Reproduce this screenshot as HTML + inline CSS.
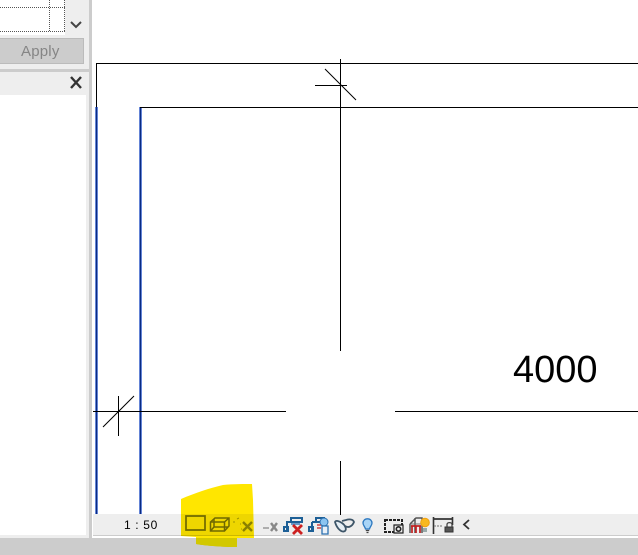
<!DOCTYPE html>
<html><head><meta charset="utf-8">
<style>
html,body{margin:0;padding:0;background:#fff}
#r{position:relative;width:638px;height:555px;overflow:hidden;background:#fff;font-family:"Liberation Sans",sans-serif}
#r div{position:absolute}
svg{position:absolute;left:0;top:0}
</style></head><body>
<div id="r">
<div style="left:0;top:0;width:89px;height:538px;background:#eee"></div>
<div style="left:89px;top:0;width:3px;height:538px;background:#ccc"></div>
<div style="left:0;top:0;width:65px;height:35px;background:#fff"></div>
<div style="left:0;top:69px;width:89px;height:3px;background:#ccc"></div>
<div style="left:0;top:95px;width:86px;height:440px;background:#fff"></div>
<div style="left:0;top:38px;width:84px;height:26px;background:#ccc;border:1px solid #bbb;border-left:0;box-sizing:border-box;color:#858585;font-size:15px;line-height:26px;padding-left:21px;letter-spacing:.2px">Apply</div>
<div style="left:93px;top:514px;width:545px;height:21px;background:#eee"></div>
<div style="left:93px;top:535px;width:545px;height:1px;background:#ccc"></div>
<div style="left:0;top:538px;width:638px;height:17px;background:#ccc"></div>
<div style="left:124px;top:518px;font-size:12px;line-height:15px;color:#000;letter-spacing:.65px;white-space:pre">1 : 50</div>
<div style="left:513px;top:348px;font-size:38px;line-height:44px;color:#000">4000</div>
<svg width="638" height="555" viewBox="0 0 638 555" fill="none">
<g stroke="#555" stroke-width="1" stroke-dasharray="1 1">
<path d="M0 7.5H65M0 31.5H65M49.5 0V32M64.500 0V32"/>
</g>
<path d="M71 22l5 5 5-5" stroke="#444" stroke-width="2"/>
<path d="M71 77l10 11M81 77L71 88" stroke="#333" stroke-width="2.400"/>
<g stroke="#6f8fe0" stroke-width="3"><path d="M96.500 107V514M140.500 107V514"/></g>
<g stroke="#0a2a80" stroke-width="1.200"><path d="M96.500 107V514M140.500 107V514"/></g>
<g stroke="#000" stroke-width="1" shape-rendering="crispEdges">
<path d="M96 63.500H638M96.500 63V107M140 107.500H638M340.500 59V351M340.500 461V515M315 85.500H347M93 411.500H286M395 411.500H638M118.500 396V436"/>
</g>
<path d="M325 69L356 100M103 427L134 396" stroke="#000" stroke-width="1"/>

<g>
<path d="M263 528h6" stroke="#999" stroke-width="1.500"/><path d="M271 523l6 8M277 523l-6 8" stroke="#888" stroke-width="2.400"/>
</g>
<g transform="translate(284,516)">
<path d="M2 6H18V2H7V6M3 6V14M0 11H4V15H0Z" stroke="#1d5f96" stroke-width="2"/>
<path d="M7 8H16" stroke="#3a7ab8" stroke-width="1.500"/>
<path d="M9 9l9 9M18 9l-9 9" stroke="#cc2020" stroke-width="2.800"/>
</g>
<g transform="translate(309,516)">
<path d="M3 6H15V2H7V6M3 6V14M0 11H4V15H0Z" stroke="#1d5f96" stroke-width="2"/>
<path d="M8 9H14M8 12H12" stroke="#d04040" stroke-width="1.400"/>
<circle cx="15" cy="6" r="4" fill="#8cc4f0" stroke="#2b70b0"/>
<path d="M13 10H19V18H13Z" fill="#e8f0f8" stroke="#2b70b0" stroke-width="1.300"/>
</g>
<g transform="translate(334,516)" stroke="#3d5568" stroke-width="1.800">
<path d="M1 6C3 13 8 17 11 15C13 13 11 9 8 7C5 5 2 4 1 6Z" fill="#e6eef4"/>
<path d="M11 10C14 12 18 11 20 6C19 3 15 3 12 4L8 5"/>
</g>
<g transform="translate(362,518)">
<path d="M5.500 0.800C8.500 0.800 10 3 10 5C10 7.500 8 8.500 7.500 11H3.500C3 8.500 1 7.500 1 5C1 3 2.500 0.800 5.500 0.800Z" fill="#a8d4f6" stroke="#2b78c0" stroke-width="1.300"/>
<path d="M3.800 12.500H7.200M4.500 14.500H6.500" stroke="#444" stroke-width="1.200"/>
</g>
<g transform="translate(384,516)" stroke="#222" stroke-width="2">
<path d="M1 4H18V16H1Z" stroke-dasharray="3 1"/>
<path d="M10 9H19V17H10Z" fill="#eee" stroke-width="1.200"/>
<circle cx="14.500" cy="13" r="2.200" stroke-width="1.600"/>
</g>
<g transform="translate(409,515)">
<path d="M1 9L7 3H13V18M1 9V18M6 3V18" stroke="#555" stroke-width="1.500"/>
<path d="M2 9H13" stroke="#777" stroke-width="1"/>
<path d="M3 11V18M7 11V18M11 11V18M2 11H12" stroke="#c02020" stroke-width="1.700"/>
<circle cx="16" cy="7.500" r="4.300" fill="#f8b820" stroke="#f0a010" stroke-width="1"/>
<path d="M14 13H18V17H14Z" fill="#9aa"/>
</g>
<g transform="translate(433,515)">
<path d="M.5 2V19M19.500 2V10" stroke="#333" stroke-width="1.600"/>
<path d="M1 4H19" stroke="#333" stroke-width="1.800"/>
<path d="M1 11H10" stroke="#888" stroke-width="1.200" stroke-dasharray="2 1"/>
<path d="M12 12H20V17H12Z" fill="#555" stroke="#333"/>
<path d="M14 12V9.500C14 7 19 7 19 9.500V12" stroke="#444" stroke-width="1.300"/>
</g>
<path d="M469 520l-5 4.500 5 4.500" stroke="#333" stroke-width="1.800"/>

<path d="M181 499C195 493 210 488 223 485C233 484 245 484 252 484L253 500L254 538L237 538L237 547C225 547 208 546 196 544L196 537L181 536Z" fill="#ffe600" style="mix-blend-mode:multiply"/>
<path d="M196 538H237V547C225 547 208 546 196 544Z" fill="#d2c800"/>
<g stroke="#6f6800" fill="none">
<path d="M186 516H205V530H186Z" stroke-width="1.700"/>
<path d="M210.500 522L215 518H229V526L224.500 531H210.500ZM210.500 522H224.500V531M224.500 522L229 518M214 518.500V527L210.500 531M214 527H228" stroke-width="1.500"/>
<path d="M243 522l9 9M252 522l-9 9" stroke="#8a8000" stroke-width="2.400"/>
<path d="M233 522h2M237 519l2-1M240 524h1M241 529h1" stroke="#a09600" stroke-width="1"/>
</g>
</svg>
</div>
</body></html>
